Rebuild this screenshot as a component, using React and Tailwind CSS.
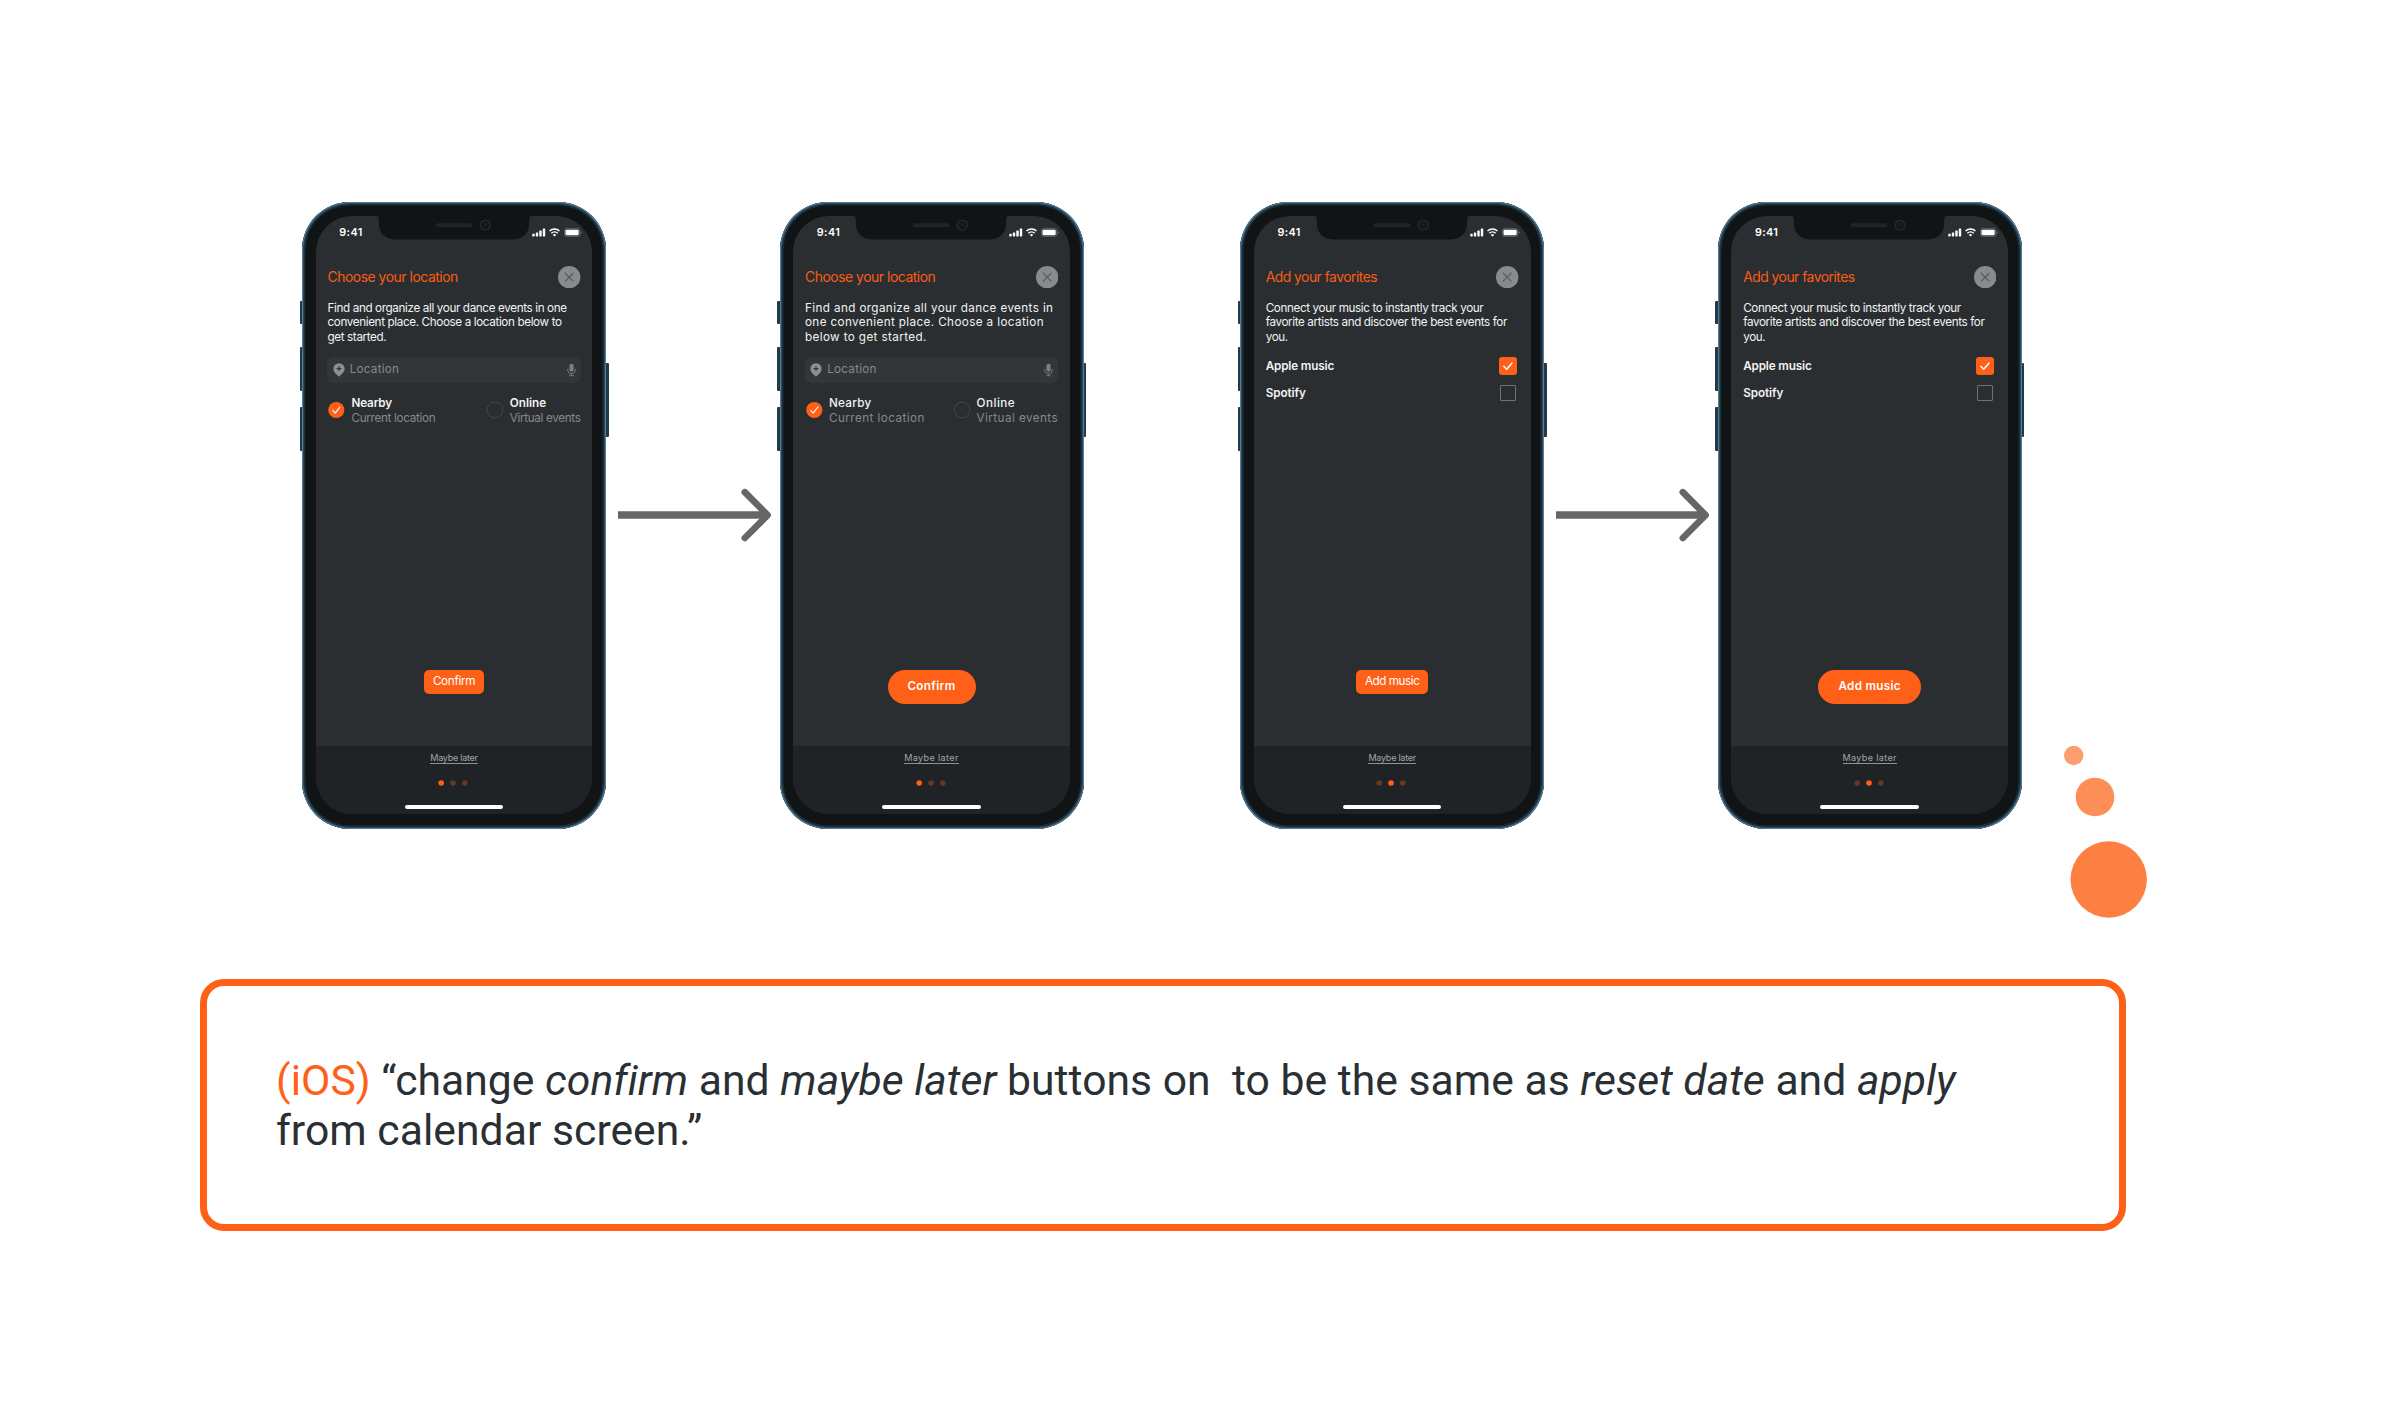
import React from "react";

function SignalIcon() {
  return (
    <svg width="14" height="9" viewBox="0 0 14 9" fill="#fff">
      <rect x="0.3" y="5.8" width="2.4" height="2.6" rx="0.6" />
      <rect x="3.8" y="4.4" width="2.4" height="4" rx="0.6" />
      <rect x="7.3" y="2.6" width="2.4" height="5.8" rx="0.6" />
      <rect x="10.8" y="0.6" width="2.4" height="7.8" rx="0.6" />
    </svg>
  );
}

function WifiIcon() {
  return (
    <svg width="11" height="9" viewBox="0 0 11 9" fill="none" stroke="#fff" strokeWidth="1.4">
      <path d="M0.5 3.1a7.1 7.1 0 0 1 10 0" />
      <path d="M2.3 5.2a4.5 4.5 0 0 1 6.4 0" />
      <path d="M5.5 8.6L3.8 6.9a2.4 2.4 0 0 1 3.4 0z" fill="#fff" stroke="none" />
    </svg>
  );
}

function BatteryIcon() {
  return (
    <svg width="18" height="9" viewBox="0 0 18 9">
      <rect x="0.4" y="0.7" width="15.4" height="7.6" rx="2" fill="none" stroke="#fff" strokeOpacity="0.35" strokeWidth="0.8" />
      <rect x="1.5" y="1.8" width="13.2" height="5.4" rx="1.1" fill="#fff" />
      <path d="M16.7 3.2v2.6c.6-.2.9-.7.9-1.3s-.3-1.1-.9-1.3z" fill="#fff" fillOpacity="0.4" />
    </svg>
  );
}

function Notch() {
  return (
    <svg className="absolute top-0 left-[60px]" width="156" height="24" viewBox="0 0 156 24">
      <path
        d="M0 0C2 0 2.8 1 2.8 3V7.5C2.8 17 9.5 23.4 18.5 23.4H137.5C146.5 23.4 153.2 17 153.2 7.5V3C153.2 1 154 0 156 0Z"
        fill="#101415"
      />
      <rect x="59.8" y="7.2" width="36.5" height="4" rx="2" fill="#202427" />
      <circle cx="109.3" cy="9.2" r="5" fill="#131718" stroke="#23272a" strokeWidth="1.6" />
      <circle cx="109.3" cy="8.4" r="1.1" fill="#23272a" />
    </svg>
  );
}

function StatusBar() {
  return (
    <div className="relative flex h-[33px] shrink-0 items-center">
      <Notch />
      <span className="ml-[23.6px] text-[10.8px] leading-[33px] font-semibold tracking-[0.4px] text-white">9:41</span>
      <div className="ml-auto flex items-center pr-[10.5px]">
        <SignalIcon />
        <span className="ml-[3px]"><WifiIcon /></span>
        <span className="ml-[4px]"><BatteryIcon /></span>
      </div>
    </div>
  );
}

function Header({ title, className }) {
  return (
    <div className="mt-[17px] flex h-[22.4px] shrink-0 items-center justify-between">
      <h2 className={`text-[13.9px] whitespace-nowrap text-[#fa5c16] ${className}`}>{title}</h2>
      <svg width="22.4" height="22.4" viewBox="0 0 22.4 22.4">
        <circle cx="11.2" cy="11.2" r="11.2" fill="#888b8d" />
        <path d="M7.3 7.3l7.8 7.8M15.1 7.3l-7.8 7.8" stroke="#5a5e60" strokeWidth="1.3" strokeLinecap="round" />
      </svg>
    </div>
  );
}

function Paragraph({ lines, className }) {
  return (
    <p className={`mt-[12.2px] shrink-0 text-[11.7px] leading-[14.83px] whitespace-nowrap text-[#f1f2f2] ${className}`}>
      {lines.map((l) => (
        <span key={l} className="block">{l}</span>
      ))}
    </p>
  );
}

function SearchField() {
  return (
    <div className="mt-[11.8px] flex h-[26px] shrink-0 items-center rounded-[6px] bg-[#323639] pr-[5px] pl-[5.5px]">
      <svg width="12" height="14" viewBox="0 0 12 14">
        <path d="M6 0.2a5.6 5.6 0 0 1 5.6 5.6c0 3.2-2.8 5.3-5.6 8-2.8-2.7-5.6-4.8-5.6-8A5.6 5.6 0 0 1 6 .2z" fill="#8d9092" />
        <path d="M6 3.3v4.8M3.6 5.7h4.8" stroke="#323639" strokeWidth="1.2" />
      </svg>
      <span className="ml-[4.8px] text-[11.7px] tracking-[0.22px] text-[#85898b]">Location</span>
      <svg className="ml-auto" width="9" height="14" viewBox="0 0 9 14" fill="none" stroke="#7b7e81">
        <rect x="2.4" y="0.8" width="4.2" height="8" rx="2.1" fill="#7b7e81" stroke="none" />
        <path d="M0.7 6v1a3.8 3.8 0 0 0 7.6 0v-1M4.5 10.8v1.9M2 12.7h5" strokeWidth="0.9" />
      </svg>
    </div>
  );
}

function Radio({ checked }) {
  return (
    <svg className="mt-[5.5px]" width="18" height="18" viewBox="0 0 18 18" fill="none">
      {checked ? (
        <>
          <circle cx="9.3" cy="9" r="8.1" fill="#ff6018" />
          <path d="M5.8 9.4l2.3 2.7 4.8-6" stroke="#fff" strokeWidth="1.1" strokeLinecap="round" strokeLinejoin="round" />
        </>
      ) : (
        <circle cx="9" cy="9" r="7.9" stroke="#44484b" strokeWidth="0.9" />
      )}
    </svg>
  );
}

function RadioOption({ checked, label, hint, labelClass, hintClass }) {
  return (
    <div className="flex gap-[6px]">
      <Radio checked={checked} />
      <div className="text-[11.7px] leading-[15px] whitespace-nowrap">
        <div className={`text-[#f3f3f3] ${labelClass}`}>{label}</div>
        <div className={`text-[#85888b] ${hintClass}`}>{hint}</div>
      </div>
    </div>
  );
}

function LocationScreen({ wide }) {
  return (
    <>
      <Header title="Choose your location" className="tracking-[-0.46px]" />
      <Paragraph
        lines={
          wide
            ? ["Find and organize all your dance events in", "one convenient place. Choose a location", "below to get started."]
            : ["Find and organize all your dance events in one", "convenient place. Choose a location below to", "get started."]
        }
        className={wide ? "tracking-[0.38px]" : "tracking-[-0.375px]"}
      />
      <SearchField />
      <div className="mt-[13px] flex shrink-0 justify-between">
        <RadioOption
          checked
          label="Nearby"
          hint="Current location"
          labelClass={wide ? "font-[450] tracking-[0.28px]" : "font-semibold tracking-[-0.15px]"}
          hintClass={wide ? "tracking-[0.44px]" : "tracking-[-0.31px]"}
        />
        <RadioOption
          label="Online"
          hint="Virtual events"
          labelClass={wide ? "font-[450] tracking-[0.46px]" : "font-semibold"}
          hintClass={wide ? "tracking-[0.43px]" : "tracking-[-0.34px]"}
        />
      </div>
    </>
  );
}

function FavoritesScreen() {
  return (
    <>
      <Header title="Add your favorites" className="tracking-[-0.52px]" />
      <Paragraph
        lines={["Connect your music to instantly track your", "favorite artists and discover the best events for", "you."]}
        className="tracking-[-0.38px]"
      />
      <div className="mt-[12.3px] flex h-[18px] shrink-0 items-center justify-between pr-[2px] text-[11.7px] font-semibold text-[#f3f3f3]">
        <span className="tracking-[-0.14px]">Apple music</span>
        <svg width="18" height="18" viewBox="0 0 18 18" fill="none">
          <rect width="18" height="18" rx="3" fill="#ff6018" />
          <path d="M4.8 9.3l2.9 3 5.4-6.2" stroke="#fff" strokeWidth="1.5" strokeLinecap="round" strokeLinejoin="round" />
        </svg>
      </div>
      <div className="mt-[9px] flex h-[18px] shrink-0 items-center justify-between pr-[3px] text-[11.7px] font-semibold text-[#f3f3f3]">
        <span className="tracking-[-0.05px]">Spotify</span>
        <span className="size-[16px] rounded-[1px] border border-[#6e7275]" />
      </div>
    </>
  );
}

function PageDots({ active }) {
  return (
    <svg className="mt-[16px] mr-[2px]" width="30" height="6" viewBox="0 0 30 6">
      {[3.2, 15, 26.8].map((cx, i) => (
        <circle key={cx} cx={cx} cy="3" r="2.8" fill={i === active ? "#ff6018" : "#643823"} />
      ))}
    </svg>
  );
}

function Phone({ screen, wide, action, active }) {
  return (
    <div className="relative h-[626.5px] w-[304px] shrink-0">
      <span className="absolute top-[99px] -left-[2.5px] h-[23px] w-[4px] rounded-l-[1px] bg-[#1f3a4b]" />
      <span className="absolute top-[145px] -left-[2.5px] h-[44px] w-[4px] rounded-l-[1px] bg-[#1f3a4b]" />
      <span className="absolute top-[205px] -left-[2.5px] h-[44px] w-[4px] rounded-l-[1px] bg-[#1f3a4b]" />
      <span className="absolute top-[160.5px] -right-[2.5px] h-[74px] w-[4px] rounded-r-[1px] bg-[#1f3a4b]" />
      <div className="relative h-full rounded-[48px] bg-[#101415] px-[13.7px] py-[14px] shadow-[inset_0_0_0_1px_#5b7c90,inset_0_0_0_2px_#284a60,inset_0_0_0_3.5px_#1a2e3b]">
        <div className="flex h-[598px] flex-col overflow-hidden rounded-[36px] bg-[#2a2e31]">
          <StatusBar />
          <div className="flex flex-1 flex-col pr-[11.8px] pl-[11.8px]">
            {screen === "location" ? <LocationScreen wide={wide} /> : <FavoritesScreen />}
          </div>
          <div className="flex h-[76px] shrink-0 items-start justify-center">
            <button className={`flex items-center justify-center bg-[#ff6018] pt-[1.5px] whitespace-nowrap text-white ${action.className}`}>
              {action.label}
            </button>
          </div>
          <div className="flex h-[68.5px] shrink-0 flex-col items-center bg-[#1f2325]">
            <span
              className={`mt-[6px] h-[12px] border-b border-[#8f9193] text-[9px] leading-[12px] text-[#a4a6a8] ${wide ? "tracking-[0.38px]" : "tracking-[-0.25px]"}`}
            >
              Maybe later
            </span>
            <PageDots active={active} />
            <span className="mt-[19px] h-[4px] w-[98.5px] rounded-full bg-white" />
          </div>
        </div>
      </div>
    </div>
  );
}

function Arrow() {
  return (
    <svg className="mt-[284px] mr-[8.5px] ml-[12px] shrink-0" width="153" height="58" viewBox="0 0 153 58" fill="none" stroke="#666">
      <path d="M0 29H148" strokeWidth="7.5" />
      <path d="M126.8 6.2L149.6 29.1L126.8 52" strokeWidth="6.6" strokeLinecap="round" strokeLinejoin="round" />
    </svg>
  );
}

const actions = {
  confirm: { label: "Confirm", className: "h-[24px] w-[59.5px] rounded-[5px] text-[11.7px] tracking-[-0.32px]" },
  confirmPill: { label: "Confirm", className: "h-[34px] w-[88px] rounded-full text-[11.7px] font-semibold tracking-[0.33px]" },
  add: { label: "Add music", className: "h-[24px] w-[72.5px] rounded-[5px] text-[11.7px] tracking-[-0.46px]" },
  addPill: { label: "Add music", className: "h-[34px] w-[102.5px] rounded-full text-[11.7px] font-semibold tracking-[0.28px]" },
};

export default function App() {
  return (
    <main className="h-[1428px] w-[2400px] overflow-hidden bg-white pt-[202px] font-[Inter,sans-serif]">
      <div className="flex items-start pl-[302px]">
        <Phone screen="location" action={actions.confirm} active={0} />
        <Arrow />
        <Phone screen="location" wide action={actions.confirmPill} active={0} />
        <div className="w-[156.7px] shrink-0" />
        <Phone screen="favorites" action={actions.add} active={1} />
        <Arrow />
        <Phone screen="favorites" wide action={actions.addPill} active={1} />
        <svg className="mt-[544px] ml-[42px] shrink-0" width="83" height="172" viewBox="0 0 83 172">
          <circle cx="9.7" cy="9.5" r="9.7" fill="#fd9d6f" />
          <circle cx="31" cy="51" r="19.3" fill="#fd8e57" />
          <circle cx="44.7" cy="133.5" r="38.2" fill="#fd7f42" />
        </svg>
      </div>
      <section className="mt-[61px] ml-[200px] h-[251.5px] w-[1926px] rounded-[24px] border-[7px] border-[#ff6018] px-[69px] pt-[69px]">
        <p className="font-[Roboto,sans-serif] text-[42.67px] leading-[50px] tracking-[0.03px] whitespace-nowrap text-[#2a2f33]">
          <span className="text-[#ff6018]">(iOS)</span> “change <i>confirm</i> and <i>maybe later</i> buttons on&nbsp; to be the same as <i>reset date</i> and <i>apply</i>
          <br />
          from calendar screen.”
        </p>
      </section>
    </main>
  );
}
